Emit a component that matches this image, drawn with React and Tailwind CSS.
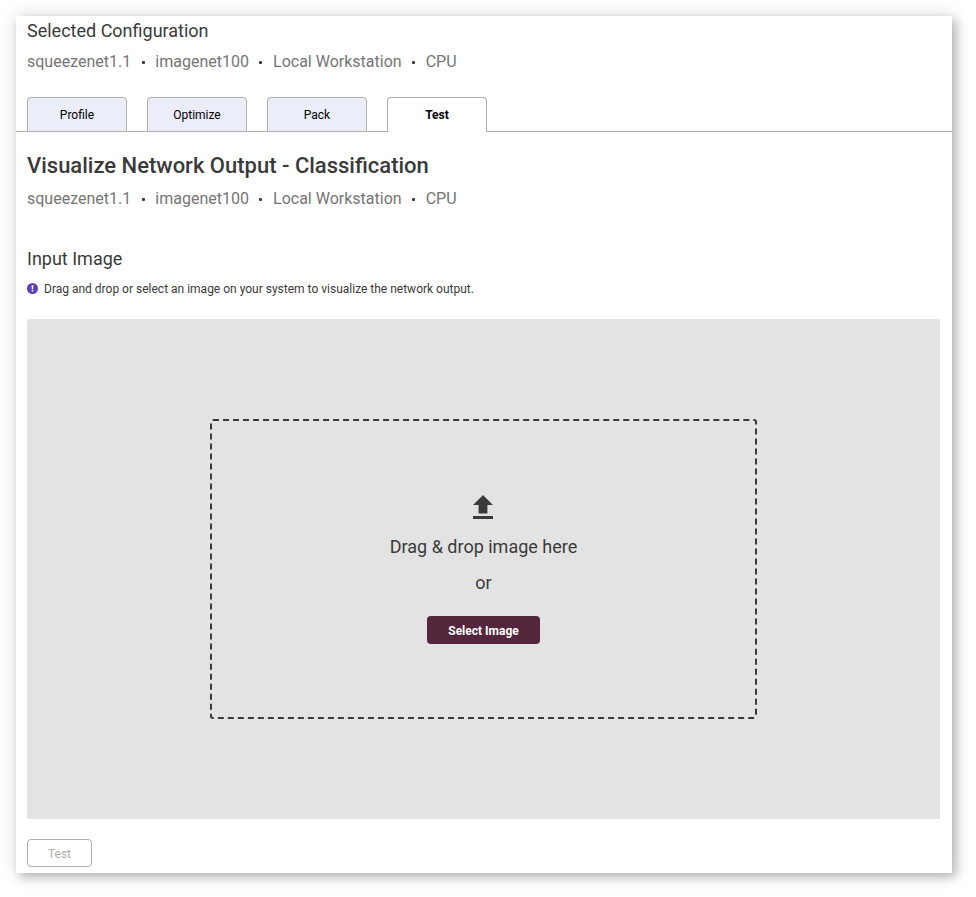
const CONFIG = ['squeezenet1.1', 'imagenet100', 'Local Workstation', 'CPU'];
const TABS = ['Profile', 'Optimize', 'Pack', 'Test'];

function Breadcrumb() {
  return (
    <div className="flex h-6 items-center text-base text-[#757575]">
      {CONFIG.map((item, i) => (
        <span key={item} className="flex items-center whitespace-nowrap">
          {i > 0 && <span className="mt-px mr-[10.6px] ml-[10.5px] size-[3px] rounded-[1px] bg-[#3a3a3a]" />}
          {item}
        </span>
      ))}
    </div>
  );
}

function Tab({ label, active }) {
  return (
    <button
      className={
        active
          ? 'h-[35px] w-[100px] rounded-t-[4px] border border-b-0 border-[#adadad] bg-white text-xs font-bold text-black'
          : 'h-[35px] w-[100px] rounded-t-[4px] border border-[#adadad] bg-[#ebedf9] text-xs text-black'
      }
    >
      {label}
    </button>
  );
}

function UploadIcon() {
  return (
    <svg className="mr-px h-6 w-5" viewBox="0 0 20 24" fill="#3a3a3a">
      <path d="M10 0 20 10H14.4V18.5H5.6V10H0ZM0 21H20V24H0Z" />
    </svg>
  );
}

function InfoIcon() {
  return (
    <svg className="mb-px size-[11px]" viewBox="0 0 11 11">
      <circle cx="5.5" cy="5.5" r="5.5" fill="#5a3fb8" />
      <path d="M4.6 2.2H6.4L6.2 6.3H4.8ZM4.7 7.1H6.3V8.6H4.7Z" fill="#fff" />
    </svg>
  );
}

export default function App() {
  return (
    <div className="h-[897px] w-[976px] overflow-hidden bg-white p-4 font-[Roboto,sans-serif] text-[#3a3a3a]">
      <main className="flex h-[857px] w-[936px] flex-col bg-white shadow-[4px_4px_10px_rgba(0,0,0,0.25),0_0_20px_rgba(0,0,0,0.12)]">
        <header className="px-[11px] pt-[3px]">
          <h2 className="h-6 text-lg leading-6">Selected Configuration</h2>
          <div className="mt-[7px]">
            <Breadcrumb />
          </div>
        </header>

        <nav className="mt-[23px] flex h-[35px] shrink-0">
          <span className="w-[11px] border-b border-[#adadad]" />
          {TABS.map((tab) => (
            <div key={tab} className="flex">
              <Tab label={tab} active={tab === 'Test'} />
              {tab !== 'Test' && <span className="w-5 border-b border-[#adadad]" />}
            </div>
          ))}
          <span className="flex-1 border-b border-[#adadad]" />
        </nav>

        <section className="pr-3 pl-[11px]">
          <h1 className="mt-[18px] h-8 text-[22px] leading-8 font-medium">
            Visualize Network Output - Classification
          </h1>
          <div className="mt-[5px]">
            <Breadcrumb />
          </div>
          <h2 className="mt-9 h-6 text-lg leading-6">Input Image</h2>
          <div className="mt-[10px] flex h-4 items-center gap-[6px] text-xs">
            <InfoIcon />
            Drag and drop or select an image on your system to visualize the network output.
          </div>

          <div className="mt-[22px] flex h-[500px] items-center justify-center rounded-[2px] bg-[#e3e3e3]">
            <div className="flex h-[300px] w-[547px] flex-col items-center rounded-[3px] border-2 border-dashed border-[#3a3a3a] pt-[74px]">
              <UploadIcon />
              <p className="mt-4 h-6 text-lg leading-6">Drag &amp; drop image here</p>
              <p className="mt-3 h-6 text-lg leading-6">or</p>
              <button className="mt-[21px] h-7 w-[113px] rounded-[4px] bg-[#54263b] pt-[2px] text-xs font-bold text-white">
                Select Image
              </button>
            </div>
          </div>

          <button className="mt-5 block h-7 w-[65px] rounded-[4px] border border-[#adadad] pt-[2px] text-xs text-[#adadad]">
            Test
          </button>
        </section>
      </main>
    </div>
  );
}
